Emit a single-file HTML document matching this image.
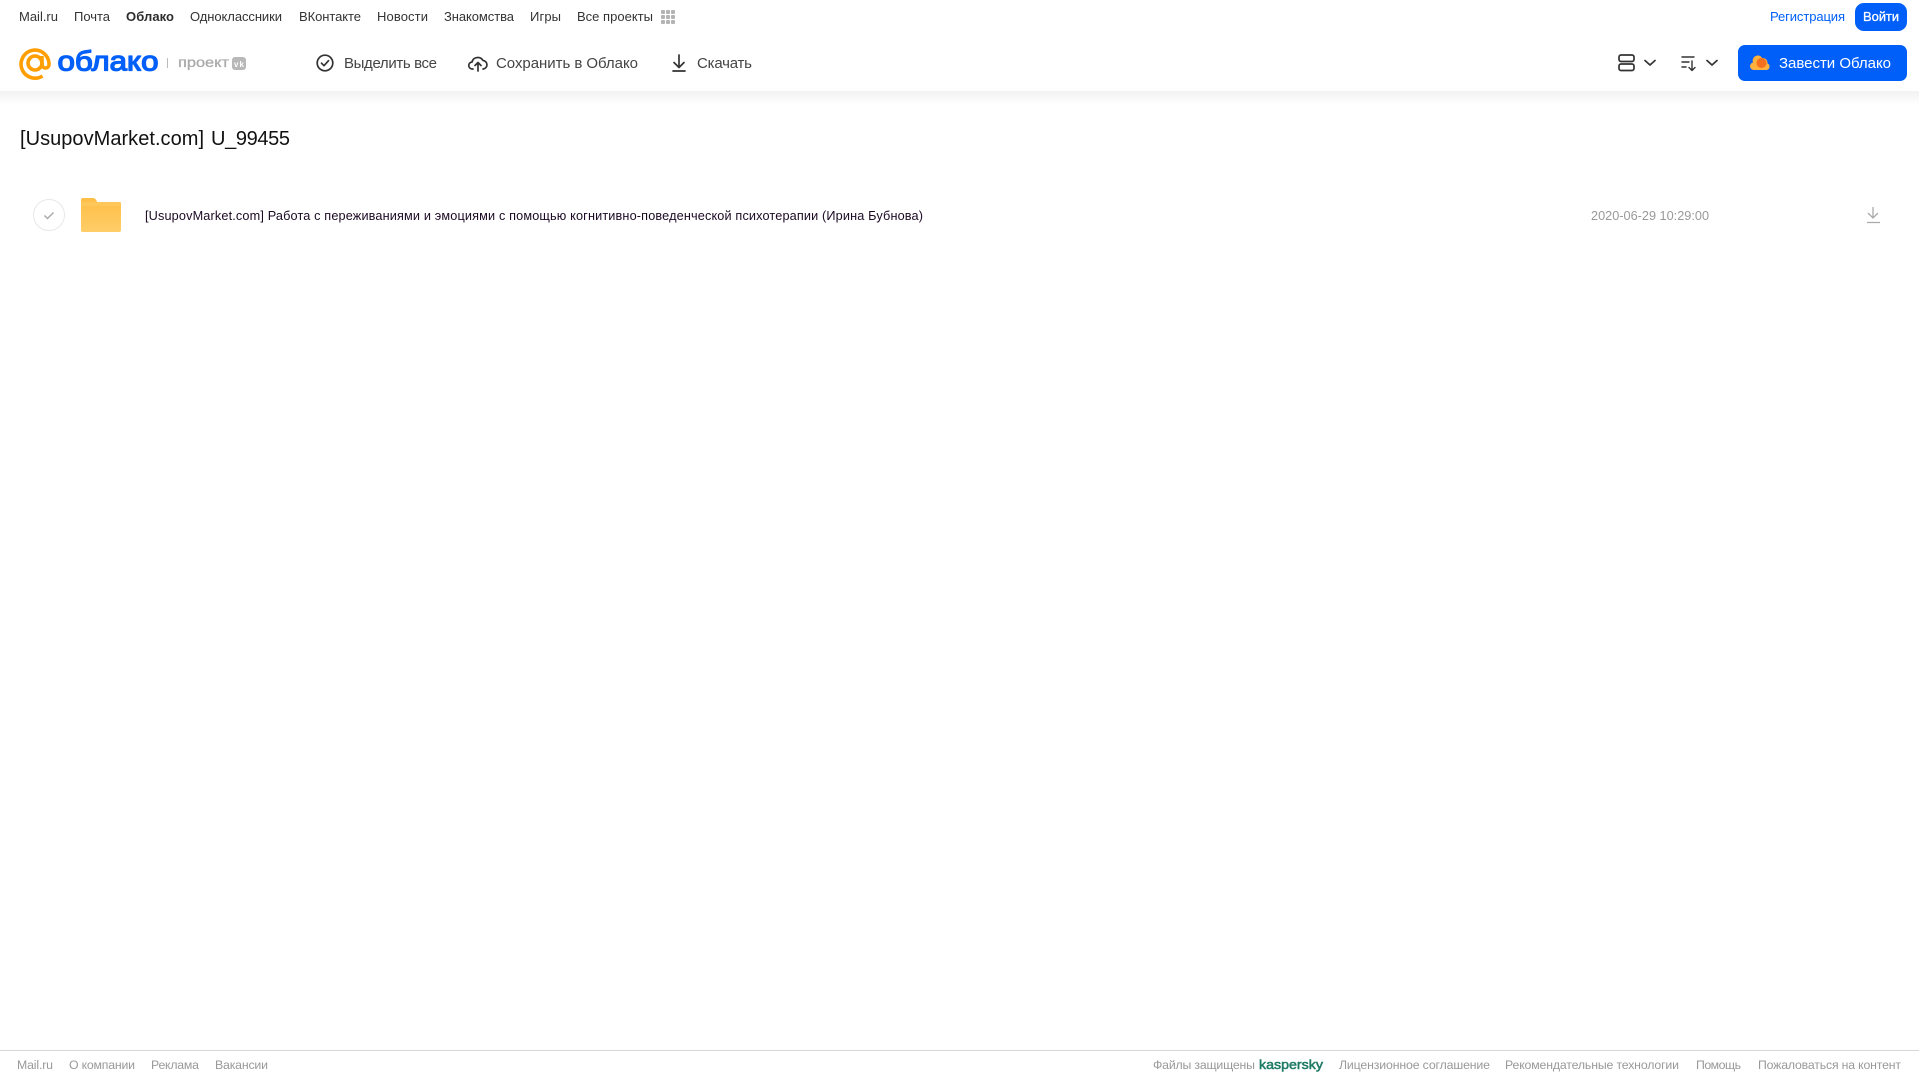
<!DOCTYPE html>
<html lang="ru"><head><meta charset="utf-8"><title>Облако</title>
<style>
html,body{margin:0;padding:0;background:#fff;width:1919px;height:1079px;overflow:hidden}
svg{position:absolute;left:0;top:0}
text{font-family:"Liberation Sans",Arial,sans-serif}
.t{font-size:13px;fill:#333}
.b{font-size:15px;fill:#444}
.f{font-size:12.3px;fill:#999}
</style></head><body>
<svg width="1919" height="1079" viewBox="0 0 1919 1079" xmlns="http://www.w3.org/2000/svg">
<defs>
<linearGradient id="sh" x1="0" y1="0" x2="0" y2="1"><stop offset="0" stop-color="#f2f2f2"/><stop offset="1" stop-color="#fff"/></linearGradient>
<linearGradient id="fo" x1="0" y1="0" x2="0" y2="1"><stop offset="0" stop-color="#ffbe45"/><stop offset="1" stop-color="#ffcd69"/></linearGradient>
</defs>
<rect x="0" y="91" width="1919" height="14" fill="url(#sh)"/>

<!-- top nav -->
<text class="t" x="19" y="21" textLength="39">Mail.ru</text>
<text class="t" x="74" y="21" textLength="36">Почта</text>
<text class="t" x="126" y="21" textLength="48" font-weight="bold" style="fill:#2c2c2c">Облако</text>
<text class="t" x="190" y="21" textLength="92">Одноклассники</text>
<text class="t" x="299" y="21" textLength="62">ВКонтакте</text>
<text class="t" x="377" y="21" textLength="51">Новости</text>
<text class="t" x="444" y="21" textLength="70">Знакомства</text>
<text class="t" x="530" y="21" textLength="31">Игры</text>
<text class="t" x="577" y="21" textLength="76">Все проекты</text>
<g fill="#b4b4b4">
<rect x="661" y="10" width="4" height="4" rx="1"/><rect x="666" y="10" width="4" height="4" rx="1"/><rect x="671" y="10" width="4" height="4" rx="1"/>
<rect x="661" y="15" width="4" height="4" rx="1"/><rect x="666" y="15" width="4" height="4" rx="1"/><rect x="671" y="15" width="4" height="4" rx="1"/>
<rect x="661" y="20" width="4" height="4" rx="1"/><rect x="666" y="20" width="4" height="4" rx="1"/><rect x="671" y="20" width="4" height="4" rx="1"/>
</g>
<text x="1770" y="21" font-size="13" fill="#005ff9" textLength="75">Регистрация</text>
<rect x="1855" y="3" width="52" height="28" rx="9" fill="#005ff9"/>
<text x="1863" y="21" font-size="13" fill="#fff" stroke="#fff" stroke-width=".3" textLength="36">Войти</text>

<!-- logo -->
<g fill="none" stroke="#ff9e00" stroke-width="3.600">
<circle cx="35" cy="63" r="7"/>
<path d="M42.500 76A14 14 0 1 1 49 63V64.500A3.500 3.500 0 0 1 42 64.500V56"/>
</g>
<text x="57.500" y="70.500" font-size="28" fill="#005ff9" stroke="#005ff9" stroke-width="1.300" stroke-linejoin="round" textLength="101" lengthAdjust="spacingAndGlyphs">облако</text>
<rect x="167" y="58" width="1" height="10" fill="#bbb"/>
<text x="178" y="67" font-size="14" fill="#aaa" stroke="#aaa" stroke-width=".3" textLength="51" lengthAdjust="spacingAndGlyphs">проект</text>
<rect x="232" y="57" width="14" height="13" rx="3" fill="#b8b8b8"/>
<text x="234" y="67" font-size="8" font-weight="bold" fill="#fff" textLength="10">vk</text>

<!-- toolbar -->
<g fill="none" stroke="#333" stroke-width="1.700" stroke-linecap="round" stroke-linejoin="round">
<circle cx="325" cy="63" r="7.800"/>
<path d="M321.500 63.200l2.500 2.500 4.500-5"/>
<path d="M473 69h-.5a3.500 3.500 0 0 1-.5-7 6 6 0 0 1 11-1.500 4.300 4.300 0 0 1 .5 8.500H483"/>
<path d="M478 71V62.500M475 65.500l3-3 3 3"/>
<path d="M679 55V67M674 62.500l5 5 5-5M673 71h12"/>
<rect x="1619" y="55" width="15" height="6.500" rx="2"/>
<rect x="1619" y="64" width="15" height="6.500" rx="2"/>
<path d="M1645 60.500l5 4.500 5-4.500"/>
<path d="M1682 57h12M1682 62h7M1682 67h4M1692 61v9M1689 67.500l3 3 3-3" stroke-width="1.400"/>
<path d="M1707 60.500l5 4.500 5-4.500"/>
</g>
<text class="b" x="344" y="68" textLength="93">Выделить все</text>
<text class="b" x="496" y="68" textLength="142">Сохранить в Облако</text>
<text class="b" x="697" y="68" textLength="55">Скачать</text>

<rect x="1738" y="45" width="169" height="36" rx="7" fill="#005ff9"/>
<path d="M1754 70a3.800 3.800 0 0 1-1-7.500 5.200 5.200 0 0 1 4.500-7c2.500-.2 3.500 1 4.500 2.500a5 5 0 0 1 5.500 5.500 3.400 3.400 0 0 1-1 6.500z" fill="#ffb13d"/>
<circle cx="1761.500" cy="63" r="5" fill="#f5701e"/>
<text x="1779" y="68" font-size="15" fill="#fff" textLength="112">Завести Облако</text>

<!-- title -->
<text x="20" y="145" font-size="20" fill="#111" textLength="184">[UsupovMarket.com]</text>
<text x="211" y="145" font-size="20" fill="#111" textLength="79">U_99455</text>

<!-- row -->
<circle cx="49" cy="215" r="15.500" fill="#fff" stroke="#e8e8e8"/>
<path d="M44.500 215.500l3 3 6-6" fill="none" stroke="#aaa" stroke-width="1.500"/>
<path d="M83 198h10a4 4 0 0 1 3.500 2.500l.6 1.500H119a2 2 0 0 1 2 2v26a2 2 0 0 1-2 2H83a2 2 0 0 1-2-2V200a2 2 0 0 1 2-2z" fill="url(#fo)"/>
<rect x="81" y="202" width="40" height="4" fill="#ffc95f" opacity=".7"/>
<text x="145" y="220" font-size="12.700" fill="#1c0a24" textLength="778">[UsupovMarket.com] Работа с переживаниями и эмоциями с помощью когнитивно-поведенческой психотерапии (Ирина Бубнова)</text>
<text x="1591" y="220" font-size="12.700" fill="#999" textLength="118">2020-06-29 10:29:00</text>
<path d="M1873 207v11M1868 213l5 5 5-5M1867 222.500h13" fill="none" stroke="#aaa" stroke-width="1.300"/>

<!-- footer -->
<rect x="0" y="1050" width="1919" height="1" fill="#d8d8d8"/>
<text class="f" x="17" y="1069" textLength="36">Mail.ru</text>
<text class="f" x="69" y="1069" textLength="66">О компании</text>
<text class="f" x="151" y="1069" textLength="48">Реклама</text>
<text class="f" x="215" y="1069" textLength="53">Вакансии</text>
<text class="f" x="1153" y="1069" textLength="102">Файлы защищены</text>
<text x="1259" y="1069" font-size="12.500" fill="#1d7a64" stroke="#1d7a64" stroke-width=".5" textLength="64" lengthAdjust="spacingAndGlyphs">kaspersky</text>
<text class="f" x="1339" y="1069" textLength="151">Лицензионное соглашение</text>
<text class="f" x="1505" y="1069" textLength="174">Рекомендательные технологии</text>
<text class="f" x="1696" y="1069" textLength="45">Помощь</text>
<text class="f" x="1758" y="1069" textLength="143">Пожаловаться на контент</text>
</svg>
</body></html>
